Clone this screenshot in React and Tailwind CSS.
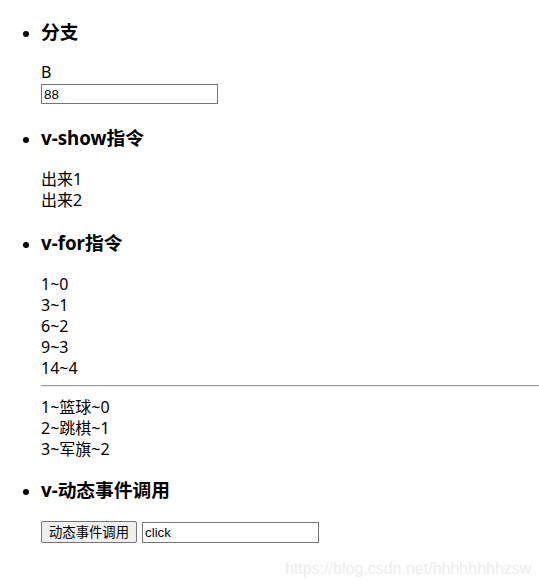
export default function App() {
  const font = { fontFamily: '"Noto Sans", "Noto Sans CJK SC", sans-serif' };
  return (
    <div className="relative w-[539px] h-[588px] bg-white text-black overflow-hidden" style={font}>
      <ul className="list-disc pl-[41px] m-0">
        <li>
          <h3 className="mt-[19px] mb-[18px] text-[18.72px] font-bold leading-[25px] h-[25px]">分支</h3>
          <div className="text-[16px] leading-[21px] h-[21px]">B</div>
          <input
            readOnly
            value="88"
            className="block mt-[1px] w-[177px] h-[20px] border border-[#767676] px-[2px] text-[13.33px] leading-[16px] outline-none"
            style={{ fontFamily: '"Liberation Sans", Arial, sans-serif' }}
          />
        </li>
        <li>
          <h3 className="mt-[21px] mb-[19px] text-[18.72px] font-bold leading-[25px] h-[25px]">v-show指令</h3>
          <div className="text-[16px] leading-[21px]">
            <div>出来1</div>
            <div>出来2</div>
          </div>
        </li>
        <li>
          <h3 className="mt-[19px] mb-[19px] text-[18.72px] font-bold leading-[25px] h-[25px]">v-for指令</h3>
          <div className="text-[16px] leading-[21px]">
            <div>1~0</div>
            <div>3~1</div>
            <div>6~2</div>
            <div>9~3</div>
            <div>14~4</div>
          </div>
          <div className="mt-[6px] h-[2px] border-t border-t-[#9a9a9a] border-b border-b-[#eeeeee]"></div>
          <div className="mt-[10px] text-[16px] leading-[21px]">
            <div>1~篮球~0</div>
            <div>2~跳棋~1</div>
            <div>3~军旗~2</div>
          </div>
        </li>
        <li>
          <h3 className="mt-[17px] mb-[19px] text-[18.72px] font-bold leading-[25px] h-[25px]">v-动态事件调用</h3>
          <div className="flex items-end gap-[5px]">
            <button className="h-[22px] w-[96px] border border-[#767676] rounded-[2px] bg-[#efefef] text-[13.33px] leading-[16px] px-[6px]">
              动态事件调用
            </button>
            <input
              readOnly
              value="click"
              className="w-[177px] h-[21px] border border-[#767676] px-[2px] text-[13.33px] leading-[16px] outline-none"
              style={{ fontFamily: '"Liberation Sans", Arial, sans-serif' }}
            />
          </div>
        </li>
      </ul>
      <div
        className="absolute left-[285px] top-[560px] text-[16px] leading-[18px] text-[#ececec]"
        style={{ fontFamily: '"Liberation Sans", Arial, sans-serif' }}
      >
        https://blog.csdn.net/hhhhhhhhzsw
      </div>
    </div>
  );
}
